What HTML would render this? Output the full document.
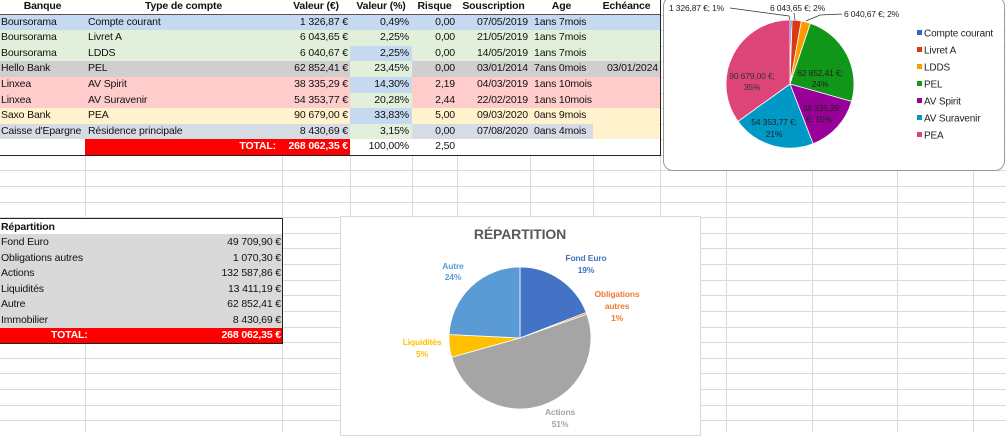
<!DOCTYPE html>
<html><head><meta charset="utf-8">
<style>
*{margin:0;padding:0;box-sizing:border-box}
body{width:1006px;height:432px;overflow:hidden;background:#fff;font-family:"Liberation Sans",Arial,sans-serif;font-size:10.5px;letter-spacing:-0.15px;color:#111;position:relative}
.a{position:absolute}
.c{position:absolute;height:16px;line-height:16px;white-space:nowrap;overflow:hidden;padding:0 3px}
.r{text-align:right}.m{text-align:center}.b{font-weight:bold}
.hl{position:absolute;height:1px;background:#dadada}
.vl{position:absolute;width:1px;background:#dadada}
</style></head><body>
<div id="grid"></div>
<div id="cells"></div>

<div class="a" style="left:663px;top:-4px;width:342px;height:175px;border:1px solid #9a9a9a;border-radius:10px;background:#fff"></div>
<svg class="a" style="left:0;top:0" width="1006" height="432" id="svg">
</svg>

<script>
var cols=[85,282,350,412,457,530,593,660,726,812,897,973];
var g='';
for(var y=14.5;y<432;y+=15.6){g+='<div class="hl" style="left:0;top:'+Math.round(y)+'px;width:1006px"></div>';}
cols.forEach(function(x){g+='<div class="vl" style="left:'+x+'px;top:0;height:432px"></div>';});
document.getElementById('grid').innerHTML=g;

var rowsTop=function(i){return Math.round(14.5+i*15.6);};
var h='';
var X=[0,85,282,350,412,457,530,593,660];
var hdr=['Banque','Type de compte','Valeur (€)','Valeur (%)','Risque','Souscription','Age','Echéance'];
h+='<div class="a" style="left:0;top:0;width:660px;height:15px;background:#fff"></div>';
for(var k=0;k<8;k++)h+='<div class="c b m" style="left:'+X[k]+'px;top:-2px;width:'+(X[k+1]-X[k])+'px">'+hdr[k]+'</div>';
var BL='#c5d9f1',GR='#e2efda',GY='#d0cece',PK='#ffcccc',YL='#fff2cc',BG='#d6dce4';
var data=[
['Boursorama','Compte courant','1 326,87 €','0,49%','0,00','07/05/2019','1ans 7mois','',BL,BL,BL],
['Boursorama','Livret A','6 043,65 €','2,25%','0,00','21/05/2019','1ans 7mois','',GR,GR,GR],
['Boursorama','LDDS','6 040,67 €','2,25%','0,00','14/05/2019','1ans 7mois','',GR,BL,GR],
['Hello Bank','PEL','62 852,41 €','23,45%','0,00','03/01/2014','7ans 0mois','03/01/2024',GY,GR,GY],
['Linxea','AV Spirit','38 335,29 €','14,30%','2,19','04/03/2019','1ans 10mois','',PK,BL,PK],
['Linxea','AV Suravenir','54 353,77 €','20,28%','2,44','22/02/2019','1ans 10mois','',PK,GR,PK],
['Saxo Bank','PEA','90 679,00 €','33,83%','5,00','09/03/2020','0ans 9mois','',YL,BL,YL],
['Caisse d\'Epargne','Résidence principale','8 430,69 €','3,15%','0,00','07/08/2020','0ans 4mois','',BG,GR,YL]];
data.forEach(function(d,i){
 var t=rowsTop(i),hh=rowsTop(i+1)-t;
 h+='<div class="a" style="left:0;top:'+t+'px;width:350px;height:'+hh+'px;background:'+d[8]+'"></div>';
 h+='<div class="a" style="left:350px;top:'+t+'px;width:62px;height:'+hh+'px;background:'+d[9]+'"></div>';
 h+='<div class="a" style="left:412px;top:'+t+'px;width:181px;height:'+hh+'px;background:'+d[8]+'"></div>';
 h+='<div class="a" style="left:593px;top:'+t+'px;width:67px;height:'+hh+'px;background:'+d[10]+'"></div>';
 var ty=t-1;
 h+='<div class="c" style="left:0;top:'+ty+'px;width:86px;padding-left:1px;padding-right:0">'+d[0]+'</div>';
 h+='<div class="c" style="left:85px;top:'+ty+'px;width:197px">'+d[1]+'</div>';
 h+='<div class="c r" style="left:282px;top:'+ty+'px;width:68px;padding-right:2px">'+d[2]+'</div>';
 h+='<div class="c r" style="left:350px;top:'+ty+'px;width:62px;padding-right:3px">'+d[3]+'</div>';
 h+='<div class="c r" style="left:412px;top:'+ty+'px;width:45px;padding-right:2px">'+d[4]+'</div>';
 h+='<div class="c r" style="left:457px;top:'+ty+'px;width:73px;padding-right:2px">'+d[5]+'</div>';
 h+='<div class="c" style="left:530px;top:'+ty+'px;width:70px;padding-left:4px">'+d[6]+'</div>';
 h+='<div class="c r" style="left:593px;top:'+ty+'px;width:67px;padding-right:2px">'+d[7]+'</div>';
});
var tt=rowsTop(8);
h+='<div class="a" style="left:0;top:'+tt+'px;width:660px;height:16px;background:#fff"></div>';
h+='<div class="a" style="left:85px;top:'+tt+'px;width:265px;height:16px;background:#ff0000"></div>';
h+='<div class="c r b" style="left:85px;top:'+(tt-1)+'px;width:197px;color:#fff;padding-right:6px">TOTAL:</div>';
h+='<div class="c r b" style="left:282px;top:'+(tt-1)+'px;width:68px;color:#fff;padding-right:2px">268 062,35 €</div>';
h+='<div class="c r" style="left:350px;top:'+(tt-1)+'px;width:62px;padding-right:3px">100,00%</div>';
h+='<div class="c r" style="left:412px;top:'+(tt-1)+'px;width:45px;padding-right:2px">2,50</div>';
h+='<div class="a" style="left:0;top:14px;width:660px;height:1px;background:#555"></div>';
h+='<div class="a" style="left:0;top:'+(tt+16)+'px;width:660px;height:1px;background:#222"></div>';
h+='<div class="a" style="left:660px;top:0;width:1px;height:'+(tt+17)+'px;background:#222"></div>';

var rt=218;
h+='<div class="a" style="left:0;top:'+rt+'px;width:283px;height:126px;border:1px solid #222;border-left:none;background:#d9d9d9"></div>';
h+='<div class="a" style="left:0;top:'+(rt+1)+'px;width:282px;height:15px;background:#fff"></div>';
h+='<div class="c b" style="left:0;top:'+(rt+1)+'px;padding-left:1px">Répartition</div>';
var rep=[['Fond Euro','49 709,90 €'],['Obligations autres','1 070,30 €'],['Actions','132 587,86 €'],['Liquidités','13 411,19 €'],['Autre','62 852,41 €'],['Immobilier','8 430,69 €']];
rep.forEach(function(d,i){var y=rt+16+i*15.6;
 h+='<div class="c" style="left:0;top:'+y+'px;padding-left:1px">'+d[0]+'</div>';
 h+='<div class="c r" style="left:150px;top:'+y+'px;width:132px;padding-right:1px">'+d[1]+'</div>';});
h+='<div class="a" style="left:0;top:328px;width:282px;height:15px;background:#ff0000"></div>';
h+='<div class="c b" style="left:48px;top:327px;color:#fff">TOTAL:</div>';
h+='<div class="c r b" style="left:150px;top:327px;width:132px;color:#fff;padding-right:1px">268 062,35 €</div>';

h+='<div class="a" style="left:340px;top:216px;width:361px;height:220px;border:1px solid #d9d9d9;background:#fff"></div>';
document.getElementById('cells').innerHTML=h;

function pie(cx,cy,r,vals,colors,stroke){
 var tot=vals.reduce(function(a,b){return a+b},0),a0=-Math.PI/2,s='';
 vals.forEach(function(v,i){var a1=a0+v/tot*2*Math.PI;
  var x0=cx+r*Math.cos(a0),y0=cy+r*Math.sin(a0),x1=cx+r*Math.cos(a1),y1=cy+r*Math.sin(a1);
  s+='<path d="M'+cx+' '+cy+'L'+x0.toFixed(2)+' '+y0.toFixed(2)+'A'+r+' '+r+' 0 '+((a1-a0)>Math.PI?1:0)+' 1 '+x1.toFixed(2)+' '+y1.toFixed(2)+'Z" fill="'+colors[i]+'" stroke="'+stroke+'" stroke-width="0.8"/>';
  a0=a1;});
 return s;}
var s='';
s+=pie(790,84,64,[1326.87,6043.65,6040.67,62852.41,38335.29,54353.77,90679],['#3366cc','#dc3912','#ff9900','#109618','#990099','#0099c6','#dd4477'],'#fff');
s+='<g font-family="Liberation Sans,Arial,sans-serif" font-size="8.5" fill="#222">';
s+='<text x="669" y="11">1 326,87 €; 1%</text><polyline points="730,8 789,16 790,20" fill="none" stroke="#333" stroke-width="0.7"/>';
s+='<text x="770" y="11">6 043,65 €; 2%</text><line x1="794" y1="13" x2="795" y2="20" stroke="#333" stroke-width="0.7"/>';
s+='<text x="844" y="17">6 040,67 €; 2%</text><polyline points="842,14 820,15 806,21" fill="none" stroke="#333" stroke-width="0.7"/>';
s+='<text x="752" y="79" text-anchor="middle" fill="#333">90 679,00 €;</text><text x="752" y="90" text-anchor="middle" fill="#333">35%</text>';
s+='<text x="820" y="76" text-anchor="middle" fill="#222">62 852,41 €;</text><text x="820" y="87" text-anchor="middle">24%</text>';
s+='<text x="821" y="111" text-anchor="middle" fill="#222">38 335,29</text><text x="819" y="122" text-anchor="middle">€; 15%</text>';
s+='<text x="774" y="125" text-anchor="middle" fill="#222">54 353,77 €;</text><text x="774" y="137" text-anchor="middle">21%</text>';
s+='</g>';
var leg=[['Compte courant','#3366cc'],['Livret A','#dc3912'],['LDDS','#ff9900'],['PEL','#109618'],['AV Spirit','#990099'],['AV Suravenir','#0099c6'],['PEA','#dd4477']];
leg.forEach(function(l,i){var y=33+i*17;s+='<rect x="917" y="'+(y-3)+'" width="5" height="5" fill="'+l[1]+'"/><text x="924" y="'+(y+3.5)+'" font-family="Liberation Sans,Arial,sans-serif" font-size="10" fill="#222">'+l[0]+'</text>';});
s+='<text x="520" y="239" text-anchor="middle" font-family="Liberation Sans,Arial,sans-serif" font-size="14" font-weight="bold" fill="#595959">RÉPARTITION</text>';
s+=pie(520,338,71,[49709.9,1070.3,132587.86,13411.19,62852.41],['#4472c4','#ed7d31','#a5a5a5','#ffc000','#5b9bd5'],'#fff');
s+='<g font-family="Liberation Sans,Arial,sans-serif" font-size="8.5" font-weight="bold" text-anchor="middle">';
s+='<text x="586" y="261" fill="#4472c4">Fond Euro</text><text x="586" y="273" fill="#4472c4">19%</text>';
s+='<text x="617" y="297" fill="#ed7d31">Obligations</text><text x="617" y="309" fill="#ed7d31">autres</text><text x="617" y="321" fill="#ed7d31">1%</text>';
s+='<text x="560" y="415" fill="#a5a5a5">Actions</text><text x="560" y="427" fill="#a5a5a5">51%</text>';
s+='<text x="422" y="345" fill="#ffc000">Liquidités</text><text x="422" y="357" fill="#ffc000">5%</text>';
s+='<text x="453" y="269" fill="#5b9bd5">Autre</text><text x="453" y="280" fill="#5b9bd5">24%</text>';
s+='</g>';
document.getElementById('svg').innerHTML=s;
</script>
</body></html>
